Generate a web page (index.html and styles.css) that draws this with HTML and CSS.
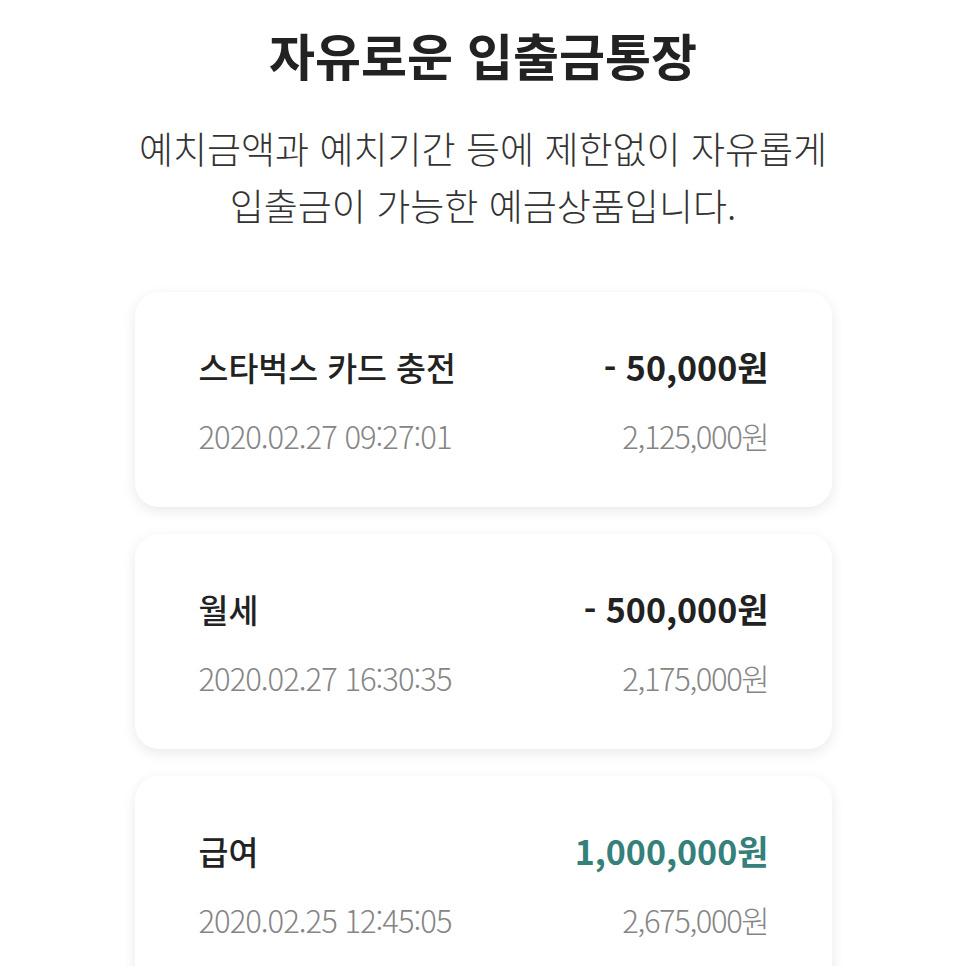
FILE: index.html
```html
<!DOCTYPE html>
<html lang="ko">
<head>
  <meta charset="UTF-8">
  <meta name="viewport" content="width=device-width, initial-scale=1.0">
  <title>자유로운 입출금통장</title>
  <link rel="stylesheet" href="styles.css">
</head>
<body>

  <div class="intro">
    <h1>자유로운 입출금통장</h1>
    <p>예치금액과 예치기간 등에 제한없이 자유롭게<br>입출금이 가능한 예금상품입니다.</p>
  </div>

  <div class="history">
    <div class="item">
      <div class="row">
        <span class="name">스타벅스 카드 충전</span>
        <span class="amount">- 50,000원</span>
      </div>
      <div class="row sub">
        <span class="date">2020.02.27 09:27:01</span>
        <span class="balance">2,125,000원</span>
      </div>
    </div>

    <div class="item">
      <div class="row">
        <span class="name">월세</span>
        <span class="amount">- 500,000원</span>
      </div>
      <div class="row sub">
        <span class="date">2020.02.27 16:30:35</span>
        <span class="balance">2,175,000원</span>
      </div>
    </div>

    <div class="item">
      <div class="row">
        <span class="name">급여</span>
        <span class="amount plus">1,000,000원</span>
      </div>
      <div class="row sub">
        <span class="date">2020.02.25 12:45:05</span>
        <span class="balance">2,675,000원</span>
      </div>
    </div>
  </div>

</body>
</html>
```

FILE: styles.css
```css
body {
  font-family: "Noto Sans CJK KR", "Noto Sans", sans-serif;
  margin: 0;
  padding: 0;
  background-color: #fff;
  color: #222;
}
.intro {
  text-align: center;
  padding-top: 22px;
}
.intro h1 {
  margin: 0;
  font-size: 50px;
  font-weight: 700;
  line-height: 64px;
  color: #222;
}
.intro p {
  margin: 34px 0 0;
  font-size: 37px;
  font-weight: 300;
  line-height: 57px;
  color: #333;
}
.history {
  width: 697px;
  margin: 58px auto 0;
  display: flex;
  flex-direction: column;
  gap: 27px;
}
.item {
  background-color: #fff;
  border-radius: 24px;
  box-shadow: 0px 4px 14px rgba(0,0,0,0.09);
  padding: 55px 63px 53px 64px;
}
.row {
  display: flex;
  justify-content: space-between;
  align-items: center;
  line-height: 40px;
}
.name {
  font-size: 32.5px;
  font-weight: 500;
  color: #222;
}
.amount {
  font-size: 34px;
  font-weight: 700;
  color: #222;
}
.amount.plus {
  color: #35807a;
}
.sub {
  margin-top: 31px;
  line-height: 36px;
}
.date, .balance {
  font-size: 31px;
  font-weight: 300;
  color: #858585;
  letter-spacing: -1px;
}
.balance {
  letter-spacing: -1.4px;
}
```
